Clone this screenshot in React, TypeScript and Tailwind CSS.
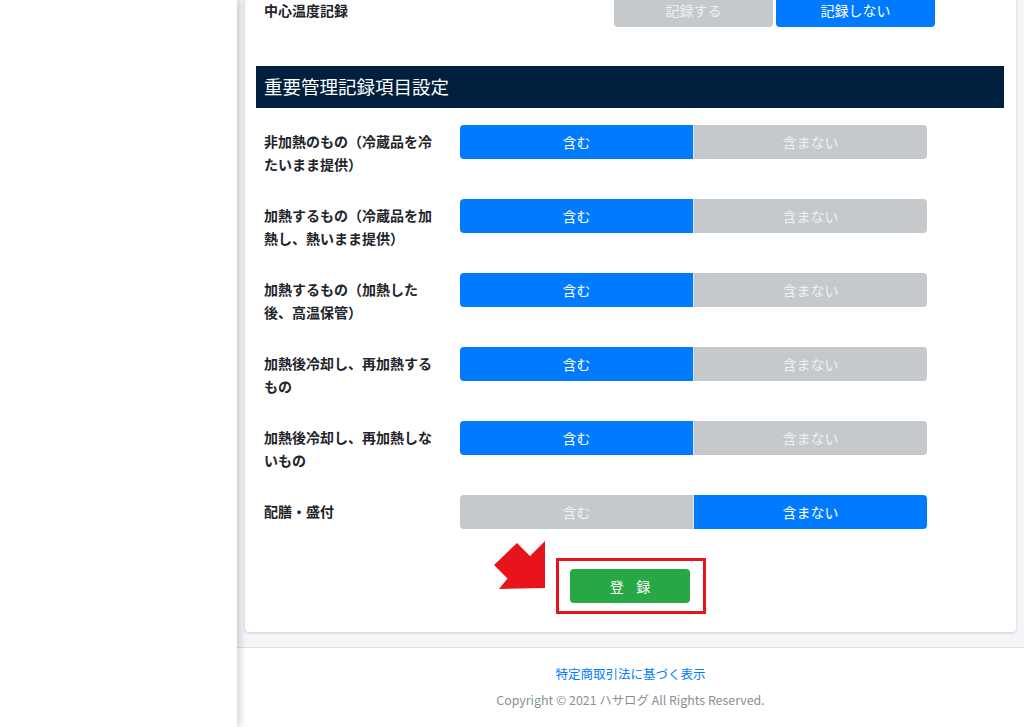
const rows = [
  { label: "非加熱のもの（冷蔵品を冷たいまま提供）", on: true },
  { label: "加熱するもの（冷蔵品を加熱し、熱いまま提供）", on: true },
  { label: "加熱するもの（加熱した後、高温保管）", on: true },
  { label: "加熱後冷却し、再加熱するもの", on: true },
  { label: "加熱後冷却し、再加熱しないもの", on: true },
  { label: "配膳・盛付", on: false },
]

export default function App() {
  return (
    <div
      className="flex h-[727px] w-[1024px] overflow-hidden bg-[#f4f6f9] text-[#212529]"
      style={{ fontFamily: '"Noto Sans CJK JP", "Noto Sans", sans-serif' }}
    >
      {/* SIDEBAR */}
      <aside className="relative z-10 w-[237px] shrink-0 bg-white shadow-[3px_0_8px_rgba(0,0,0,0.18)]" />

      {/* MAIN */}
      <main className="flex flex-1 flex-col">
        <div className="px-[8px] pb-[15px]">
          <div className="-mt-[7px] rounded-b-[4px] bg-white pl-[11px] pr-[12px] pb-[18px] shadow-[0_1px_3px_rgba(0,0,0,0.18)]">
            {/* top row */}
            <div className="flex items-start">
              <div className="flex-1 pl-[8px] pt-[6px] text-[14px] font-bold leading-[23px]">中心温度記録</div>
              <div className="mr-[69px] flex gap-[3px]">
                <button className="h-[34px] w-[159px] rounded-[4px] bg-[#c6c9cc] text-[14px] text-[#eef0f2]">記録する</button>
                <button className="h-[34px] w-[159px] rounded-[4px] bg-[#007bff] text-[14px] text-white">記録しない</button>
              </div>
            </div>

            {/* header */}
            <div className="mt-[39px] flex h-[42px] items-center bg-[#001f3f] pl-[8px] text-[18.5px] text-white">
              重要管理記録項目設定
            </div>

            {/* rows */}
            <div className="mt-[17px]">
              {rows.map((row, i) => (
                <div key={i} className="flex h-[74px] items-start pl-[8px]">
                  <div className="w-[176px] pt-[5px] text-[14px] font-bold leading-[23px]">{row.label}</div>
                  <div className="ml-[20px] flex h-[34px] w-[467px]">
                    <button
                      className={
                        row.on
                          ? "flex-1 rounded-l-[4px] bg-[#007bff] text-[14px] text-white"
                          : "flex-1 rounded-l-[4px] bg-[#c6c9cc] text-[14px] text-[#eef0f2]"
                      }
                    >
                      含む
                    </button>
                    <button
                      className={
                        row.on
                          ? "flex-1 rounded-r-[4px] border-l border-[#e4e6e8] bg-[#c6c9cc] text-[14px] text-[#eef0f2]"
                          : "flex-1 rounded-r-[4px] border-l border-[#e4e6e8] bg-[#007bff] text-[14px] text-white"
                      }
                    >
                      含まない
                    </button>
                  </div>
                </div>
              ))}
            </div>

            {/* submit */}
            <div className="-mt-[11px] flex justify-center">
              <div className="relative ml-[2px] border-[3px] border-[#e3141d] pl-[11px] pr-[13px] py-[8px]">
                <svg
                  className="absolute left-[-69px] top-[-24px]"
                  width="60"
                  height="60"
                  viewBox="488 534 60 60"
                >
                  <polygon
                    points="492,562 515,540 528,553 543,538 543,585 497,586 505.5,575.5"
                    fill="#e8141c"
                  />
                </svg>
                <button className="h-[34px] w-[120px] rounded-[4px] bg-[#28a745] text-[14px] tracking-[0.9em] text-white">
                  <span className="ml-[0.9em]">登録</span>
                </button>
              </div>
            </div>
          </div>
        </div>

        {/* FOOTER */}
        <footer className="flex-1 border-t border-[#dee2e6] bg-white pt-[16px] text-center">
          <div className="text-[12.5px] leading-[20px] text-[#007bff]">特定商取引法に基づく表示</div>
          <div className="mt-[6px] text-[12.4px] leading-[20px] text-[#869099]">Copyright © 2021 ハサログ All Rights Reserved.</div>
        </footer>
      </main>
    </div>
  )
}
